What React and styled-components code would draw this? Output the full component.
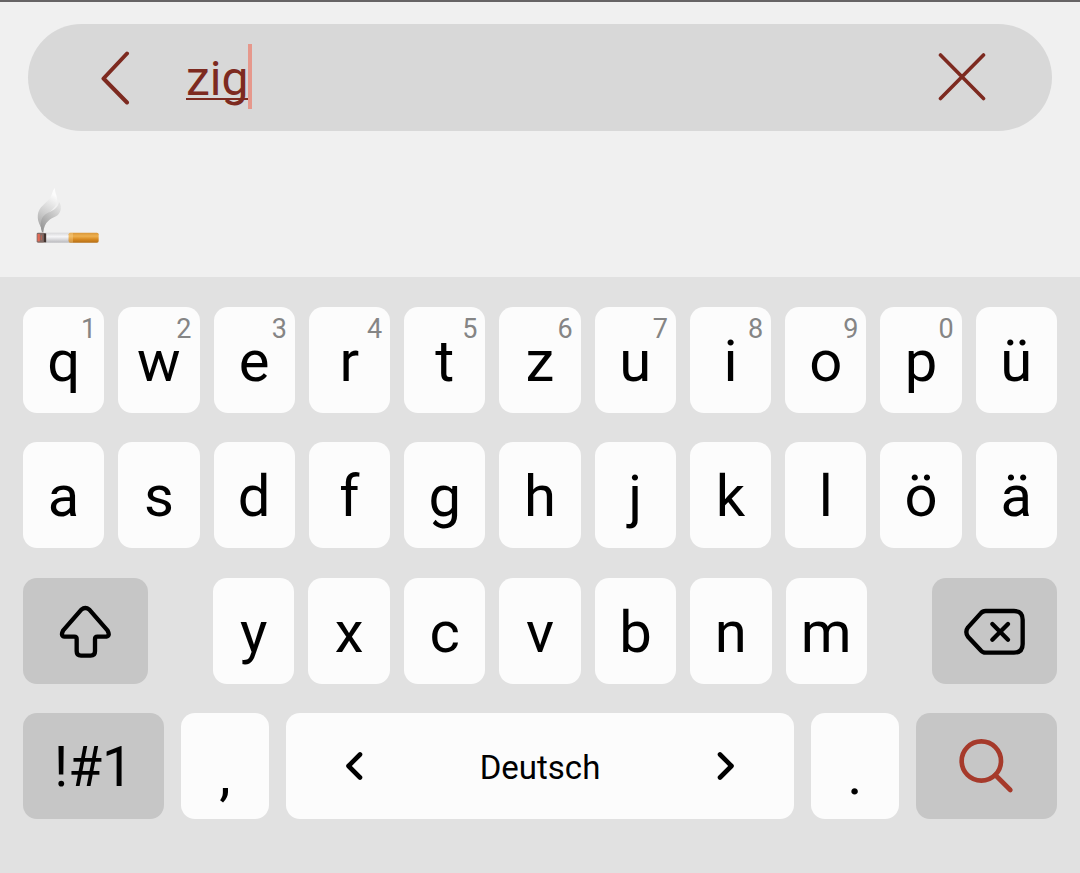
import React, { useState } from "react";
import styled, { createGlobalStyle } from "styled-components";

const GlobalStyle = createGlobalStyle`
  *, *::before, *::after { box-sizing: border-box; }
  body {
    margin: 0;
    background: #e1e1e1;
    font-family: Roboto, "Liberation Sans", sans-serif;
    color: #000;
  }
  button, input { font: inherit; color: inherit; }
`;

const Screen = styled.div`
  display: flex;
  flex-direction: column;
  min-height: 100vh;
`;

const SearchPanel = styled.header`
  padding: 22px 28px 33px;
  background: #f0f0f0;
  border-top: 2px solid #666465;
`;

const SearchBar = styled.form`
  display: flex;
  align-items: center;
  height: 107px;
  padding: 0 66px 2px 71px;
  border-radius: 54px;
  background: #d8d8d8;
  color: #7d2a20;
`;

const IconButton = styled.button`
  display: flex;
  padding: 0;
  border: 0;
  background: none;
  color: inherit;
  cursor: pointer;
`;

const Field = styled.div`
  display: flex;
  flex: 1;
  align-items: center;
  margin-left: 55px;
`;

const SearchInput = styled.input`
  field-sizing: content;
  padding: 4px 0 0;
  border: 0;
  outline: 0;
  background: none;
  font-size: 48px;
  line-height: 60px;
  caret-color: transparent;
  text-decoration: underline 2px;
  text-decoration-skip-ink: none;
  text-underline-offset: 3px;
`;

const Caret = styled.span`
  width: 4px;
  height: 65px;
  background: #e6988c;
`;

const Results = styled.div`
  display: flex;
  padding: 57px 8px 0;
`;

const Keyboard = styled.main`
  display: flex;
  flex: 1;
  flex-direction: column;
  justify-content: space-between;
  padding: 30px 23px 54px;
  background: #e1e1e1;
`;

const Row = styled.div`
  display: grid;
  grid-template-columns: ${(p) => p.$columns};
  gap: ${(p) => p.$gap}px;
`;

const Key = styled.button`
  position: relative;
  display: flex;
  align-items: center;
  justify-content: center;
  min-width: 0;
  height: 106px;
  padding: ${(p) => (p.$low ? 16 : 2)}px 0 0;
  border: 0;
  border-radius: 14px;
  background: #fcfcfc;
  font-size: 58px;
  line-height: 68px;
  cursor: pointer;
`;

const ActionKey = styled(Key)`
  padding: 2px 0 0;
  background: #c6c6c6;
  color: ${(p) => (p.$accent ? "#a63a2b" : "#000")};
  font-size: 55px;
`;

const SpaceKey = styled(Key)`
  justify-content: space-between;
  padding: 0 58px;
  font-size: 33px;
`;

const SpaceLabel = styled.span`
  padding-top: 4px;
`;

const Hint = styled.span`
  position: absolute;
  top: 6px;
  right: 8px;
  color: #858585;
  font-size: 27px;
  line-height: 32px;
`;

const Icon = styled.svg`
  display: block;
  fill: none;
  stroke: currentColor;
  stroke-linecap: round;
  stroke-linejoin: round;
`;

const BackIcon = () => (
  <Icon width="32" height="56" viewBox="0 0 32 56" strokeWidth="4">
    <path d="M28 4.5 4.5 29.5 28 53.5" />
  </Icon>
);

const ClearIcon = () => (
  <Icon width="48" height="48" viewBox="0 0 48 48" strokeWidth="3.6">
    <path d="M2.5 2 45.5 45.5M45.5 2 2.5 45.5" />
  </Icon>
);

const ShiftIcon = () => (
  <Icon width="56" height="56" viewBox="174 129 168 168" strokeWidth="13">
    <path d="M244 146Q256 136 268 146L323 209Q331 225 319 227H292Q285 227 285 234V271Q285 284 272 284H243Q230 284 230 271V234Q230 227 223 227H194Q181 225 189 209Z" />
  </Icon>
);

const BackspaceIcon = () => (
  <Icon width="64" height="56" viewBox="549 129 192 168" strokeWidth="13">
    <path d="M617 150H702Q728 150 728 176V249Q728 275 702 275H617Q608 275 602 268L564 227Q554 213 564 199L602 157Q608 150 617 150Z" />
    <path d="M637 189 684 236M684 189 637 236" />
  </Icon>
);

const SearchIcon = () => (
  <Icon width="56" height="56" viewBox="538 537 168 168" strokeWidth="14">
    <circle cx="605" cy="603" r="59" />
    <path d="M647 645 692 690" />
  </Icon>
);

const Chevron = ({ d }) => (
  <Icon width="20" height="32" viewBox="0 0 20 32" strokeWidth="4.6">
    <path d={d} />
  </Icon>
);

const CigaretteEmoji = () => (
  <svg width="64" height="56" viewBox="48 24 192 168" role="img" aria-label="Zigarette">
    <defs>
      <linearGradient id="paper" x1="0" y1="0" x2="0" y2="1">
        <stop offset="0" stopColor="#d8d8da" />
        <stop offset="0.4" stopColor="#f6f6f8" />
        <stop offset="1" stopColor="#b8b8bc" />
      </linearGradient>
      <linearGradient id="filter" x1="0" y1="0" x2="0" y2="1">
        <stop offset="0" stopColor="#d99637" />
        <stop offset="0.35" stopColor="#eeb04f" />
        <stop offset="0.65" stopColor="#d98b22" />
        <stop offset="1" stopColor="#b56f17" />
      </linearGradient>
      <linearGradient id="smokeBack" x1="0" y1="1" x2="0.3" y2="0">
        <stop offset="0" stopColor="#a0a0a0" />
        <stop offset="0.45" stopColor="#cdcdcd" />
        <stop offset="1" stopColor="#fcfcfc" />
      </linearGradient>
      <linearGradient id="smokeFront" x1="0" y1="1" x2="0.7" y2="0">
        <stop offset="0" stopColor="#8e8e8e" />
        <stop offset="0.5" stopColor="#b9b9b9" />
        <stop offset="1" stopColor="#e2e2e2" />
      </linearGradient>
    </defs>
    <path fill="url(#smokeBack)" d="M67 148C51 126 48 101 63 82C76 67 90 60 97 38C99 31 102 26 105 24C104 40 114 49 111 66C107 90 72 98 67 148Z" />
    <path fill="url(#smokeFront)" d="M66 157C58 130 62 108 84 98C104 90 114 82 117 66C128 82 122 101 108 109C92 117 73 124 70 157Z" />
    <rect x="74" y="158" width="76" height="30" fill="url(#paper)" />
    <rect x="146" y="158" width="90" height="30" rx="5" fill="url(#filter)" />
    <path stroke="#ffe0a0" strokeWidth="2" d="M150 158V188M156 158V188" />
    <rect x="50" y="158" width="24" height="30" rx="4" fill="#806b66" />
    <path stroke="#e36955" strokeWidth="7" d="M56 162V184" />
    <path stroke="#b56558" strokeWidth="4" d="M64 166V181" />
    <path stroke="#42342f" strokeWidth="7" d="M75 160V187" />
  </svg>
);

const TOP_ROW = [..."qwertzuiopü"];
const HOME_ROW = [..."asdfghjklöä"];
const BOTTOM_ROW = [..."yxcvbnm"];
const HINTS = "1234567890";

export default function App() {
  const [query, setQuery] = useState("zig");
  const type = (char) => setQuery((q) => q + char);

  return (
    <Screen>
      <GlobalStyle />
      <SearchPanel>
        <SearchBar onSubmit={(e) => e.preventDefault()}>
          <IconButton type="button" aria-label="Zurück">
            <BackIcon />
          </IconButton>
          <Field>
            <SearchInput
              aria-label="Emoji suchen"
              value={query}
              onChange={(e) => setQuery(e.target.value)}
              spellCheck={false}
            />
            <Caret />
          </Field>
          <IconButton type="button" aria-label="Löschen" onClick={() => setQuery("")}>
            <ClearIcon />
          </IconButton>
        </SearchBar>
        <Results>
          <IconButton type="button" aria-label="Zigarette">
            <CigaretteEmoji />
          </IconButton>
        </Results>
      </SearchPanel>

      <Keyboard>
        <Row $columns="repeat(11, 1fr)" $gap={14}>
          {TOP_ROW.map((char, i) => (
            <Key key={char} type="button" onClick={() => type(char)}>
              {char}
              {HINTS[i] && <Hint>{HINTS[i]}</Hint>}
            </Key>
          ))}
        </Row>
        <Row $columns="repeat(11, 1fr)" $gap={14}>
          {HOME_ROW.map((char) => (
            <Key key={char} type="button" onClick={() => type(char)}>
              {char}
            </Key>
          ))}
        </Row>
        <Row $columns="125fr 654fr 125fr" $gap={65}>
          <ActionKey type="button" aria-label="Umschalt">
            <ShiftIcon />
          </ActionKey>
          <Row $columns="repeat(7, 1fr)" $gap={14}>
            {BOTTOM_ROW.map((char) => (
              <Key key={char} type="button" onClick={() => type(char)}>
                {char}
              </Key>
            ))}
          </Row>
          <ActionKey
            type="button"
            aria-label="Rücktaste"
            onClick={() => setQuery((q) => q.slice(0, -1))}
          >
            <BackspaceIcon />
          </ActionKey>
        </Row>
        <Row $columns="141fr 88fr 508fr 88fr 141fr" $gap={17}>
          <ActionKey type="button">!#1</ActionKey>
          <Key type="button" $low onClick={() => type(",")}>,</Key>
          <SpaceKey type="button" onClick={() => type(" ")}>
            <Chevron d="M16 4.5 4.5 16 16 27.5" />
            <SpaceLabel>Deutsch</SpaceLabel>
            <Chevron d="M4 4.5 15.5 16 4 27.5" />
          </SpaceKey>
          <Key type="button" $low onClick={() => type(".")}>.</Key>
          <ActionKey type="button" $accent aria-label="Suchen">
            <SearchIcon />
          </ActionKey>
        </Row>
      </Keyboard>
    </Screen>
  );
}
